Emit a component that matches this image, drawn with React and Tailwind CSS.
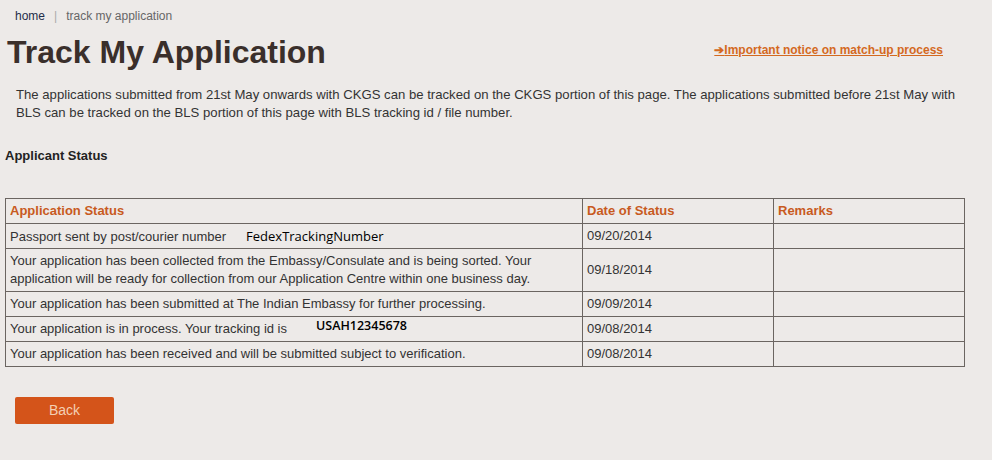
export default function App() {
  const rows = [
    {
      text: (
        <>
          Passport sent by post/courier number
          <span className="ml-[20px] font-['Open_Sans',sans-serif] text-[13px] text-black">FedexTrackingNumber</span>
        </>
      ),
      date: "09/20/2014",
      h: "h-[25px]",
    },
    {
      text: "Your application has been collected from the Embassy/Consulate and is being sorted. Your application will be ready for collection from our Application Centre within one business day.",
      date: "09/18/2014",
      h: "h-[43px]",
    },
    {
      text: "Your application has been submitted at The Indian Embassy for further processing.",
      date: "09/09/2014",
      h: "h-[25px]",
    },
    {
      text: (
        <>
          Your application is in process. Your tracking id is
          <span className="relative -top-[3px] ml-[29px] font-['Open_Sans',sans-serif] text-[12.5px] font-semibold text-black">USAH12345678</span>
        </>
      ),
      date: "09/08/2014",
      h: "h-[25px]",
    },
    {
      text: "Your application has been received and will be submitted subject to verification.",
      date: "09/08/2014",
      h: "h-[25px]",
    },
  ];

  return (
    <div className="min-h-[460px] w-[992px] bg-[#edeae8] font-['Liberation_Sans',Arial,sans-serif] text-[#333]">
      {/* breadcrumb */}
      <div className="flex items-center pl-[15px] pt-[8px] text-[12px] leading-[16px]">
        <span className="text-[#1f2d4a]">home</span>
        <span className="mx-[9px] text-[#aaa]">|</span>
        <span className="text-[#666]">track my application</span>
      </div>

      {/* title row */}
      <div className="flex items-end justify-between pl-[7px] pr-[49px]">
        <h1 className="pt-[8px] text-[32px] font-bold leading-[40px] text-[#3a2f2b]">Track My Application</h1>
        <a href="#" className="mb-[13px] text-[12px] font-bold text-[#d4691f] underline">
          <span className="no-underline">➔</span>Important notice on match-up process
        </a>
      </div>

      <p className="mt-[14px] pl-[16px] pr-[30px] text-[13.15px] leading-[18px] text-[#333]">
        The applications submitted from 21st May onwards with CKGS can be tracked on the CKGS portion of this page. The applications submitted before 21st May with BLS can be tracked on the BLS portion of this page with BLS tracking id / file number.
      </p>

      <h2 className="mt-[26px] pl-[5px] text-[13px] font-bold leading-[16px] text-[#222]">Applicant Status</h2>

      <table className="ml-[5px] mt-[34px] w-[960px] border-collapse text-[13px] text-[#333]">
        <thead>
          <tr className="h-[25px]">
            <th className="w-[577px] border border-[#6b6561] px-[4px] text-left font-bold text-[#c85a1e]">Application Status</th>
            <th className="w-[191px] border border-[#6b6561] px-[4px] text-left font-bold text-[#c85a1e]">Date of Status</th>
            <th className="border border-[#6b6561] px-[4px] text-left font-bold text-[#c85a1e]">Remarks</th>
          </tr>
        </thead>
        <tbody>
          {rows.map((r, i) => (
            <tr key={i} className={r.h}>
              <td className="border border-[#6b6561] px-[4px] leading-[18px]">{r.text}</td>
              <td className="border border-[#6b6561] px-[4px]">{r.date}</td>
              <td className="border border-[#6b6561] px-[4px]"></td>
            </tr>
          ))}
        </tbody>
      </table>

      <div className="pl-[15px] pt-[30px]">
        <button className="h-[27px] w-[99px] rounded-[2px] bg-[#d4541a] text-[14px] text-[#f3d0b4]">Back</button>
      </div>
    </div>
  );
}
